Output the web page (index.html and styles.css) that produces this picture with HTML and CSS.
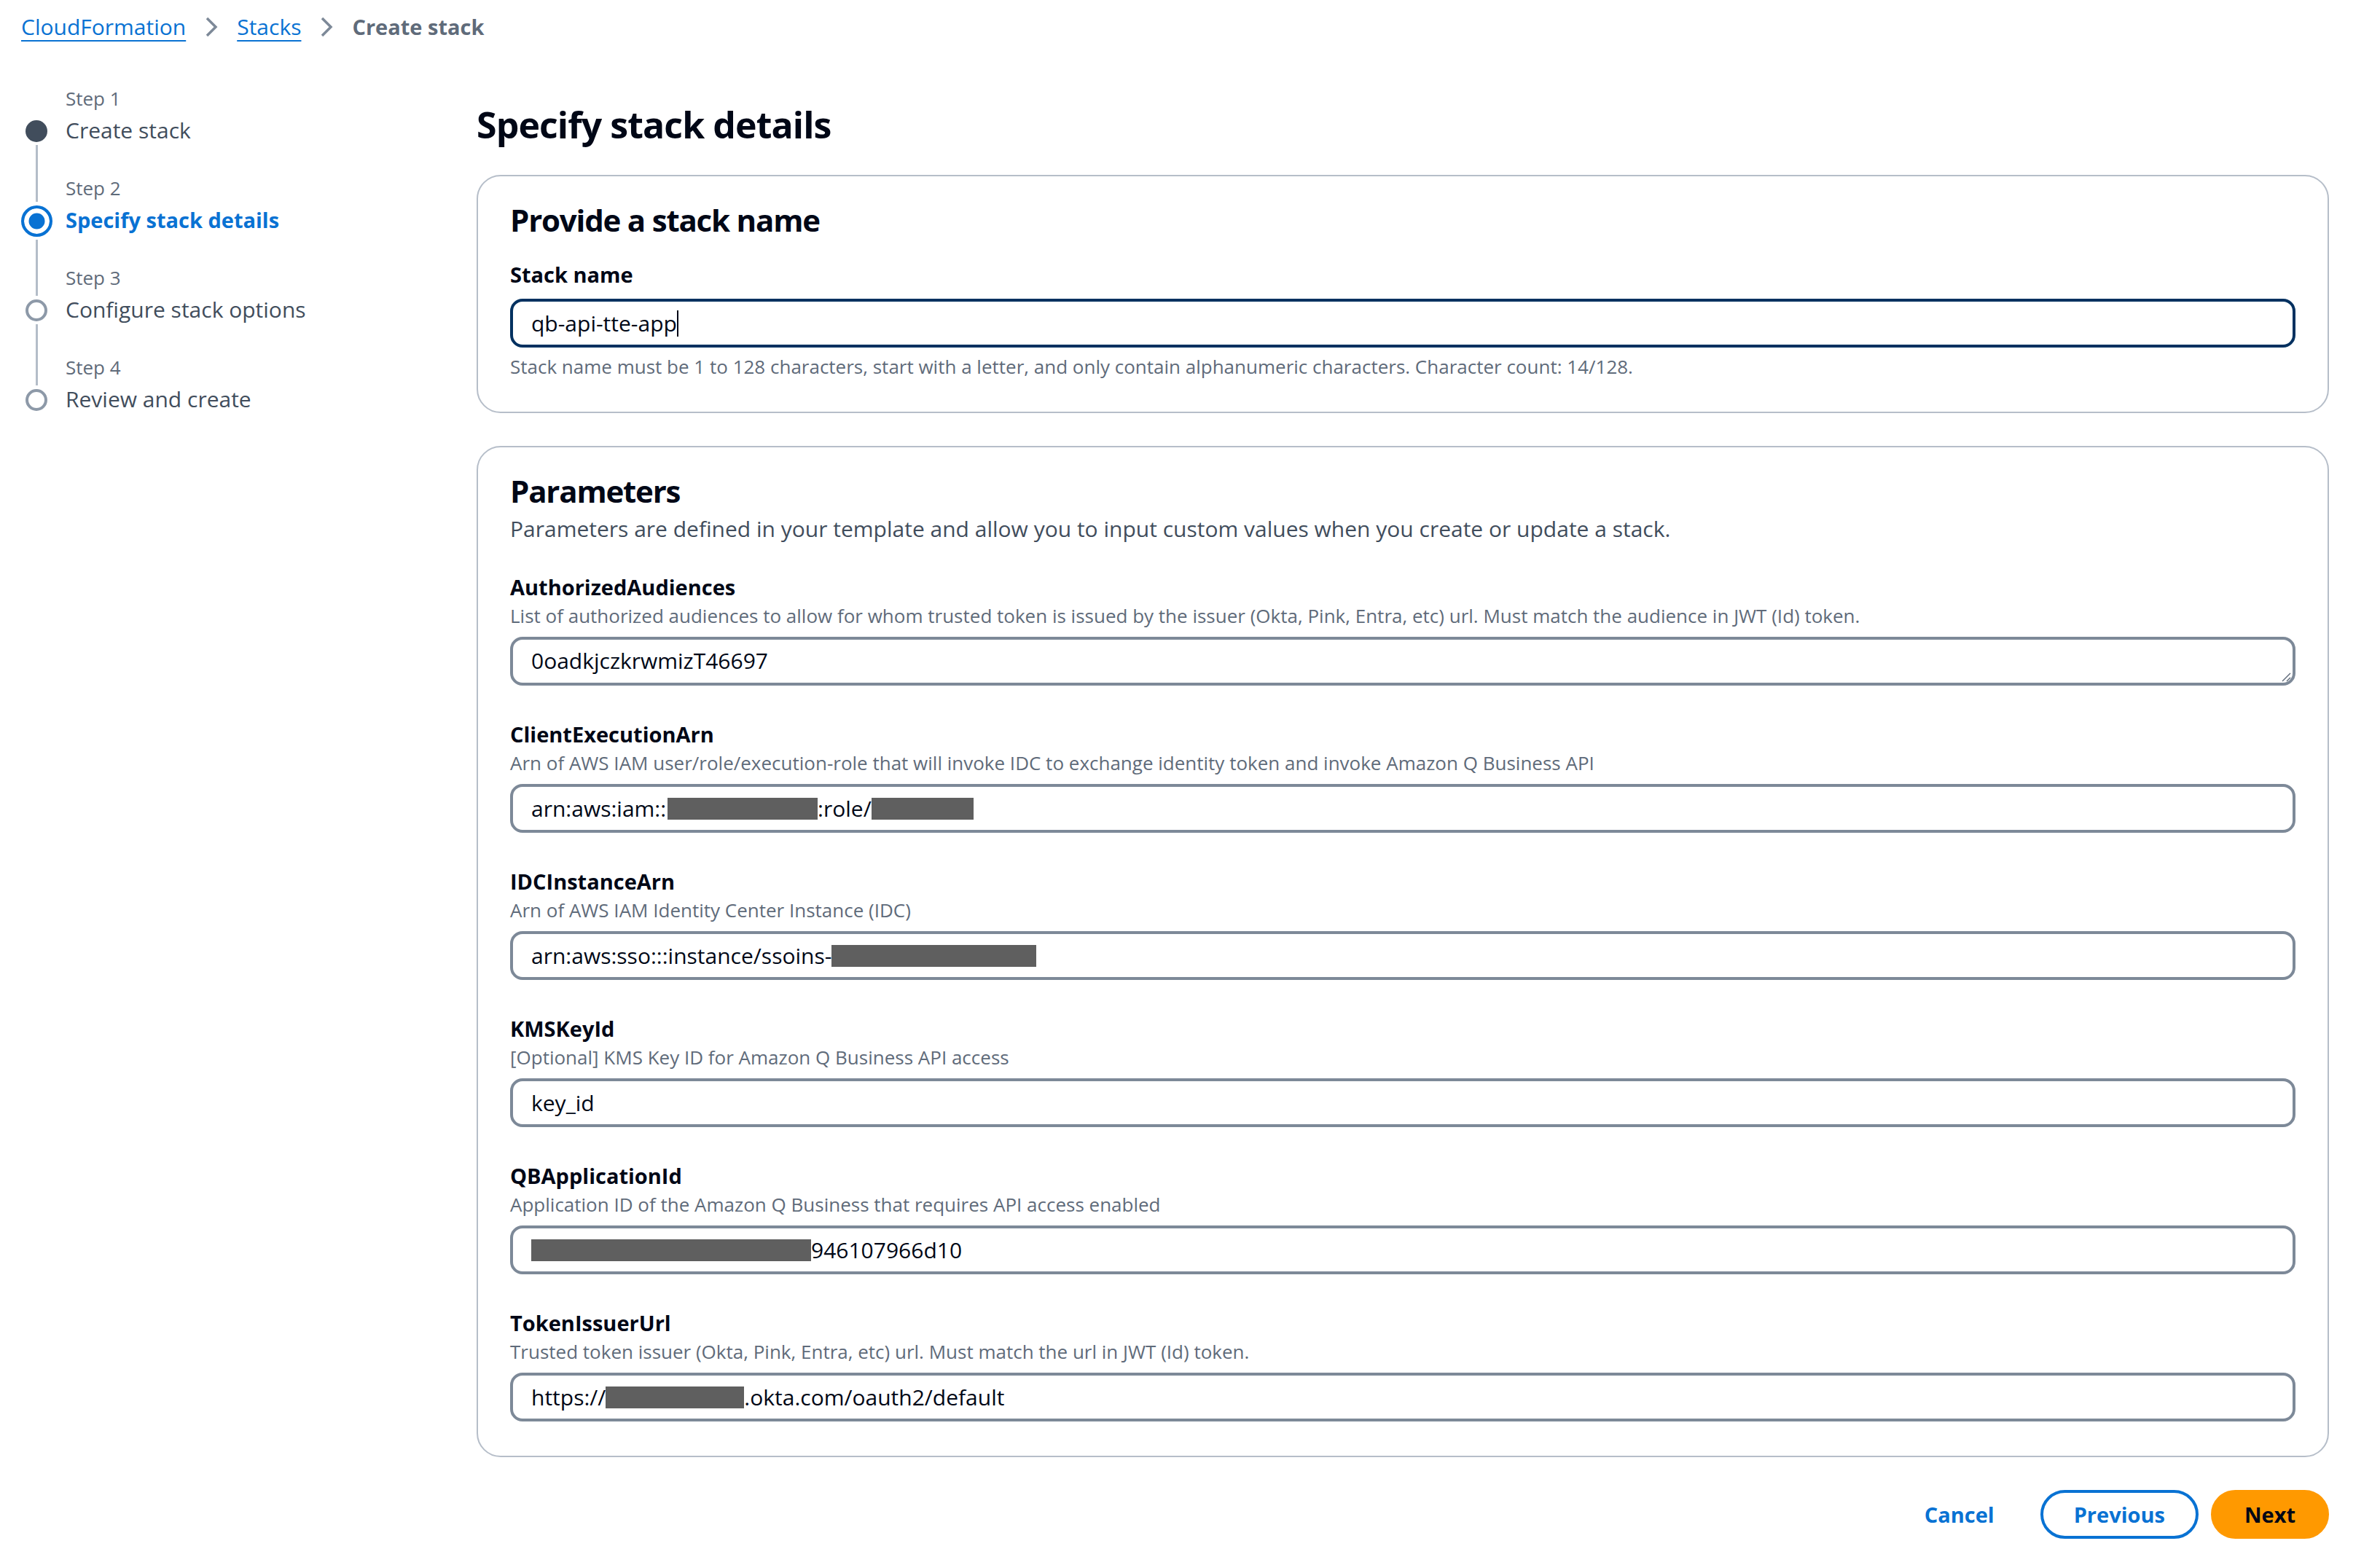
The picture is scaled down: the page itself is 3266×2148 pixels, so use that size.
FILE: index.html
```html
<!DOCTYPE html>
<html lang="en">
<head>
<meta charset="utf-8">
<title>Create stack - CloudFormation</title>
<link rel="stylesheet" href="styles.css">
</head>
<body>
<nav class="breadcrumbs">
  <a class="crumb-link" href="#">CloudFormation</a>
  <svg class="chev" viewBox="0 0 18 30"><polyline points="3,3 15,15 3,27"/></svg>
  <a class="crumb-link" href="#">Stacks</a>
  <svg class="chev" viewBox="0 0 18 30"><polyline points="3,3 15,15 3,27"/></svg>
  <span class="crumb-current">Create stack</span>
</nav>

<div class="layout">
  <aside class="steps">
    <div class="step first">
      <div class="track"><span class="line"></span><span class="dot dot-done"></span><span class="line"></span></div>
      <div class="step-text"><div class="step-num">Step 1</div><div class="step-title">Create stack</div></div>
    </div>
    <div class="step">
      <div class="track"><span class="line"></span><span class="dot dot-active"></span><span class="line"></span></div>
      <div class="step-text"><div class="step-num">Step 2</div><div class="step-title active">Specify stack details</div></div>
    </div>
    <div class="step">
      <div class="track"><span class="line"></span><span class="dot dot-todo"></span><span class="line"></span></div>
      <div class="step-text"><div class="step-num">Step 3</div><div class="step-title">Configure stack options</div></div>
    </div>
    <div class="step last">
      <div class="track"><span class="line"></span><span class="dot dot-todo"></span><span class="line"></span></div>
      <div class="step-text"><div class="step-num">Step 4</div><div class="step-title">Review and create</div></div>
    </div>
  </aside>

  <main class="content">
    <h1>Specify stack details</h1>

    <section class="card">
      <h2>Provide a stack name</h2>
      <div class="name-field">
        <div class="field-label">Stack name</div>
        <div class="input focused"><span>qb-api-tte-app</span><span class="caret"></span></div>
        <div class="constraint">Stack name must be 1 to 128 characters, start with a letter, and only contain alphanumeric characters. Character count: 14/128.</div>
      </div>
    </section>

    <section class="card">
      <h2>Parameters</h2>
      <div class="card-desc">Parameters are defined in your template and allow you to input custom values when you create or update a stack.</div>
      <div class="fields">
        <div class="field">
          <div class="field-label">AuthorizedAudiences</div>
          <div class="field-desc">List of authorized audiences to allow for whom trusted token is issued by the issuer (Okta, Pink, Entra, etc) url. Must match the audience in JWT (Id) token.</div>
          <div class="textarea-wrap">
            <textarea class="textarea" rows="1">0oadkjczkrwmizT46697</textarea>
            <svg class="grip" viewBox="0 0 14 14"><line x1="2" y1="13" x2="13" y2="2"/><line x1="8" y1="13" x2="13" y2="8"/></svg>
          </div>
        </div>
        <div class="field">
          <div class="field-label">ClientExecutionArn</div>
          <div class="field-desc">Arn of AWS IAM user/role/execution-role that will invoke IDC to exchange identity token and invoke Amazon Q Business API</div>
          <div class="input"><span>arn:aws:iam::</span><span class="redact r1"></span><span>:role/</span><span class="redact r2"></span></div>
        </div>
        <div class="field">
          <div class="field-label">IDCInstanceArn</div>
          <div class="field-desc">Arn of AWS IAM Identity Center Instance (IDC)</div>
          <div class="input"><span>arn:aws:sso:::instance/ssoins-</span><span class="redact r3"></span></div>
        </div>
        <div class="field">
          <div class="field-label">KMSKeyId</div>
          <div class="field-desc">[Optional] KMS Key ID for Amazon Q Business API access</div>
          <div class="input"><span>key_id</span></div>
        </div>
        <div class="field">
          <div class="field-label">QBApplicationId</div>
          <div class="field-desc">Application ID of the Amazon Q Business that requires API access enabled</div>
          <div class="input"><span class="redact r5"></span><span>946107966d10</span></div>
        </div>
        <div class="field">
          <div class="field-label">TokenIssuerUrl</div>
          <div class="field-desc">Trusted token issuer (Okta, Pink, Entra, etc) url. Must match the url in JWT (Id) token.</div>
          <div class="input"><span>https://</span><span class="redact r6"></span><span>.okta.com/oauth2/default</span></div>
        </div>
      </div>
    </section>

    <div class="actions">
      <button class="btn btn-link">Cancel</button>
      <button class="btn btn-normal">Previous</button>
      <button class="btn btn-primary">Next</button>
    </div>
  </main>
</div>
</body>
</html>
```

FILE: styles.css
```css
* { box-sizing: border-box; }

html, body {
  margin: 0;
  background: #ffffff;
}

body {
  font-family: "Open Sans", "Noto Sans", Arial, sans-serif;
  color: #000716;
  font-size: 30px;
  line-height: 42px;
  padding-top: 16px;
}

/* Breadcrumbs */
.breadcrumbs {
  display: flex;
  align-items: center;
  gap: 26px;
  padding-left: 29px;
  height: 42px;
}

.crumb-link {
  color: #0972d3;
  text-decoration: underline;
  text-decoration-thickness: 2px;
  text-underline-offset: 7px;
}

.crumb-current {
  color: #5f6b7a;
  font-weight: 700;
  font-size: 29px;
}

.chev {
  width: 18px;
  height: 30px;
  fill: none;
  stroke: #7d8998;
  stroke-width: 3.5;
}

/* Layout */
.layout {
  display: grid;
  grid-template-columns: 654px 1fr;
  margin-top: 60px;
  padding-right: 70px;
}

/* Steps navigation */
.steps {
  padding-left: 29px;
}

.step {
  display: grid;
  grid-template-columns: 42px 1fr;
  column-gap: 19px;
  height: 123px;
}

.track {
  display: flex;
  flex-direction: column;
  align-items: center;
}

.line {
  flex: 1;
  width: 3px;
  background: #b4bdc8;
}

.line:first-child { margin-bottom: 5px; }
.line:last-child { margin-top: 4px; }

.first .line:first-child,
.last .line:last-child {
  visibility: hidden;
}

.dot {
  flex: none;
  border-radius: 50%;
}

.dot-done {
  width: 30px;
  height: 30px;
  background: #414d5c;
}

.dot-active {
  width: 43px;
  height: 43px;
  border: 4px solid #0972d3;
  background: #0972d3;
  box-shadow: inset 0 0 0 6.5px #ffffff;
}

.dot-todo {
  width: 30px;
  height: 30px;
  border: 4px solid #8d99a8;
  background: #ffffff;
}

.step-num {
  font-size: 26px;
  line-height: 34px;
  color: #5f6b7a;
  margin-bottom: 6px;
}

.step-title {
  color: #414d5c;
  line-height: 42px;
}

.step-title.active {
  color: #0972d3;
  font-weight: 700;
  font-size: 29px;
}

/* Main content */
.content {
  padding-top: 22px;
}

h1 {
  margin: 0 0 38px;
  font-size: 50px;
  line-height: 62px;
  font-weight: 700;
  letter-spacing: -0.9px;
}

.card {
  border: 2px solid #b6bec9;
  border-radius: 33px;
  padding: 35px 44px 45px;
}

.card + .card {
  margin-top: 45px;
}

.card:last-of-type {
  padding-bottom: 47px;
}

h2 {
  margin: 0;
  font-size: 42px;
  line-height: 50px;
  font-weight: 700;
  letter-spacing: -1.2px;
}

.card-desc {
  margin-top: 6px;
  color: #414d5c;
}

.name-field {
  margin-top: 29px;
}

.field-label {
  font-weight: 700;
  font-size: 29px;
  line-height: 42px;
}

.constraint,
.field-desc {
  font-size: 26px;
  line-height: 33px;
  color: #5f6b7a;
}

.constraint {
  margin-top: 10px;
}

.field-desc {
  margin-top: 2px;
}

.fields {
  display: flex;
  flex-direction: column;
  gap: 46px;
  margin-top: 38px;
}

.input,
.textarea {
  margin-top: 12px;
  height: 67px;
  border: 4px solid #7d8998;
  border-radius: 17px;
  background: #ffffff;
  color: #000716;
  font-family: inherit;
  font-size: 30px;
}

.input {
  display: flex;
  align-items: center;
  padding: 0 25px;
  white-space: pre;
}

.input.focused {
  border-color: #033160;
}

.caret {
  width: 2px;
  height: 36px;
  background: #000716;
}

.textarea-wrap {
  position: relative;
}

.textarea {
  display: block;
  width: 100%;
  padding: 8px 25px;
  line-height: 42px;
  resize: none;
  outline: none;
  overflow: hidden;
}

.grip {
  position: absolute;
  right: 6px;
  bottom: 5px;
  width: 14px;
  height: 14px;
  stroke: #5f6b7a;
  stroke-width: 1.5;
}

.redact {
  display: inline-block;
  height: 30px;
  background: #5f5f5f;
}

.r1 { width: 206px; margin-left: 2px; }
.r2 { width: 140px; }
.r3 { width: 281px; }
.r5 { width: 384px; }
.r6 { width: 190px; }

/* Actions */
.actions {
  display: flex;
  justify-content: flex-end;
  gap: 17px;
  margin-top: 45px;
}

.btn {
  height: 67px;
  padding: 0 42px;
  border: 4px solid transparent;
  border-radius: 34px;
  font-family: inherit;
  font-size: 29px;
  font-weight: 700;
  background: transparent;
  cursor: pointer;
}

.btn-link {
  color: #0972d3;
}

.btn-normal {
  color: #0972d3;
  border-color: #0972d3;
  background: #ffffff;
}

.btn-primary {
  color: #000716;
  background: #ff9900;
  border-color: #ff9900;
}
```
